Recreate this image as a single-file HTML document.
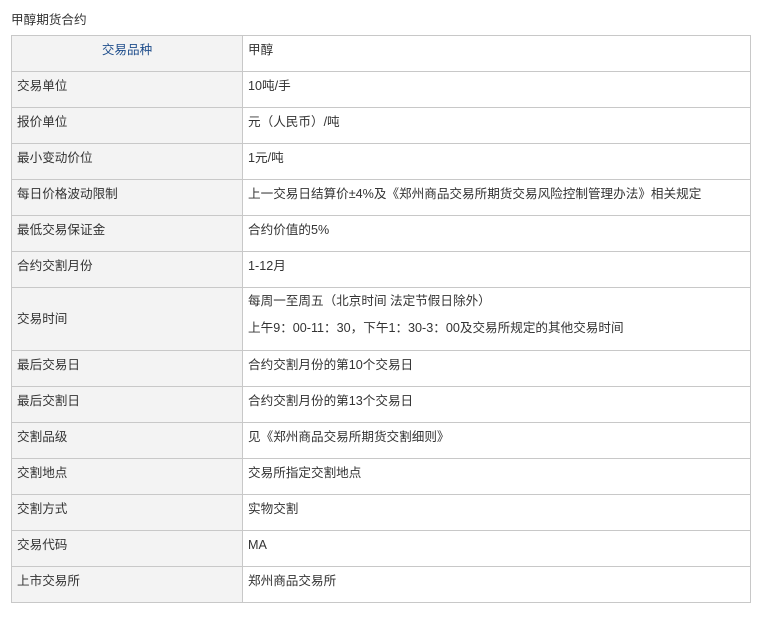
<!DOCTYPE html>
<html><head><meta charset="utf-8"><style>
body{margin:0;background:#fff;font-family:"Liberation Sans","Noto Sans CJK SC",sans-serif;font-size:12.6px;color:#333;}
.t{position:absolute;left:11px;top:9px;color:#333;}
table{position:absolute;left:11px;top:35px;border-collapse:collapse;width:740px;table-layout:fixed;}
td{border:1px solid #c8c8c8;height:36px;padding:0 5px;vertical-align:top;line-height:16px;padding-top:6px;box-sizing:border-box;}
td.l{background:#f3f3f3;width:231px;}
td.h{text-align:center;color:#1f4e8c;}
p{margin:0;}
</style></head><body>
<div class="t">甲醇期货合约</div>
<table>
<tr><td class="l h">交易品种</td><td>甲醇</td></tr>
<tr><td class="l">交易单位</td><td>10吨/手</td></tr>
<tr><td class="l">报价单位</td><td>元（人民币）/吨</td></tr>
<tr><td class="l">最小变动价位</td><td>1元/吨</td></tr>
<tr><td class="l">每日价格波动限制</td><td>上一交易日结算价±4%及《郑州商品交易所期货交易风险控制管理办法》相关规定</td></tr>
<tr><td class="l">最低交易保证金</td><td>合约价值的5%</td></tr>
<tr><td class="l">合约交割月份</td><td>1-12月</td></tr>
<tr><td class="l" style="height:63px;vertical-align:middle;padding-top:0">交易时间</td><td style="height:63px;padding-top:5px"><p style="line-height:16px">每周一至周五（北京时间 法定节假日除外）</p><p style="margin-top:11px;line-height:16px">上午9：00-11：30，下午1：30-3：00及交易所规定的其他交易时间</p></td></tr>
<tr><td class="l">最后交易日</td><td>合约交割月份的第10个交易日</td></tr>
<tr><td class="l">最后交割日</td><td>合约交割月份的第13个交易日</td></tr>
<tr><td class="l">交割品级</td><td>见《郑州商品交易所期货交割细则》</td></tr>
<tr><td class="l">交割地点</td><td>交易所指定交割地点</td></tr>
<tr><td class="l">交割方式</td><td>实物交割</td></tr>
<tr><td class="l">交易代码</td><td>MA</td></tr>
<tr><td class="l">上市交易所</td><td>郑州商品交易所</td></tr>
</table>
</body></html>
